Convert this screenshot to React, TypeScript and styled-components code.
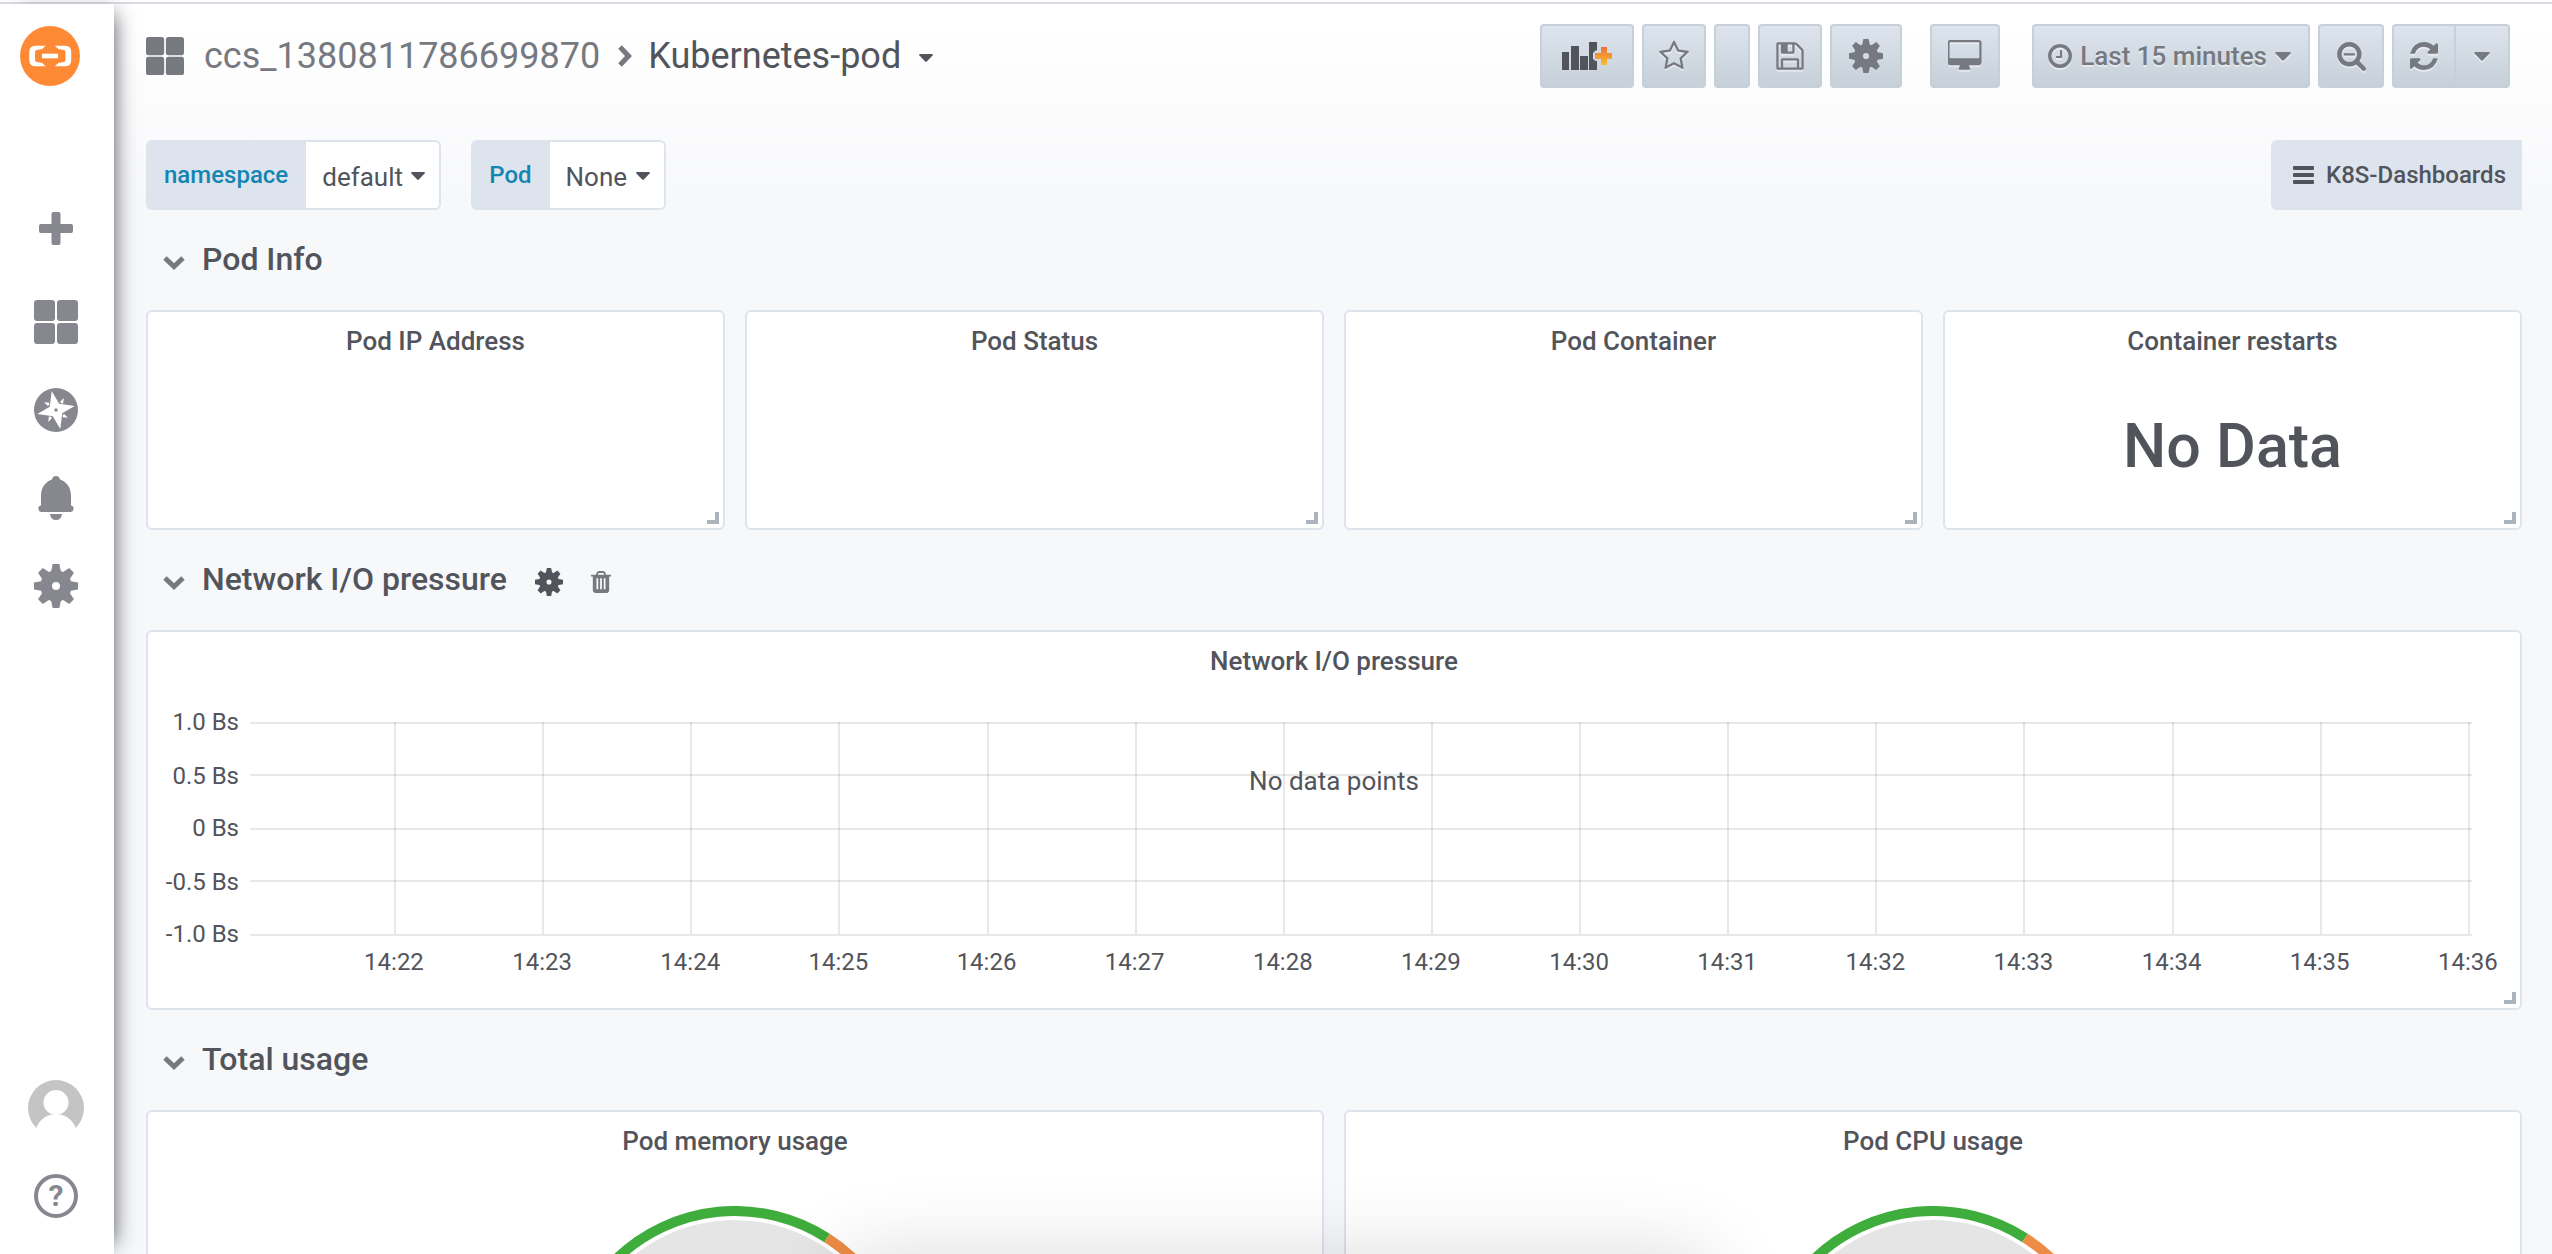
import React from "react";
import styled, { createGlobalStyle } from "styled-components";

const color = {
  text: "#52545c",
  weak: "#767980",
  icon: "#87888f",
  link: "#1385b3",
  panelBorder: "#dde4ed",
  buttonBorder: "#c7d0d9",
  page: "#f7f8fa",
};

const GlobalStyle = createGlobalStyle`
  * { box-sizing: border-box; }
  body {
    margin: 0;
    background: #fff;
    color: ${color.text};
    font-family: Roboto, "Liberation Sans", sans-serif;
    font-size: 26px;
  }
  button, select { font: inherit; color: inherit; }
  h1, h2, h3, p { margin: 0; font-weight: 500; }
  svg { display: block; flex: none; }
`;

/* ---------- layout ---------- */

const Shell = styled.div`
  height: 100vh;
  padding-top: 2px;
  overflow: hidden;
  display: flex;
  flex-direction: column;
`;

const Frame = styled.div`
  flex: 1;
  min-height: 0;
  border-top: 2px solid #dcdce4;
  display: flex;
`;

const Sidebar = styled.nav`
  position: relative;
  z-index: 1;
  flex: none;
  width: 114px;
  padding: 22px 2px 14px 0;
  background: #fff;
  box-shadow: 10px 0 20px -10px ${color.text};
  display: flex;
  flex-direction: column;
  align-items: center;
`;

const LogoLink = styled.a`
  margin: 0 12px 104px 0;
`;

const NavLink = styled.a`
  height: 88px;
  display: flex;
  align-items: center;
  justify-content: center;
  color: ${color.icon};
  text-decoration: none;
`;

const SidebarSpacer = styled.div`
  flex: 1;
`;

const HelpMark = styled.span`
  width: 44px;
  height: 44px;
  border: 4px solid ${color.icon};
  border-radius: 50%;
  font-size: 30px;
  font-weight: 700;
  line-height: 36px;
  text-align: center;
`;

const Main = styled.main`
  flex: 1;
  min-width: 0;
  overflow: hidden;
  padding: 0 30px 0 32px;
  background: linear-gradient(180deg, #fff 20px, ${color.page} 200px);
`;

const Navbar = styled.header`
  height: 136px;
  padding: 20px 12px 0 0;
  display: flex;
  justify-content: space-between;
  align-items: flex-start;
`;

const Breadcrumb = styled.div`
  height: 64px;
  display: flex;
  align-items: center;
  color: ${color.weak};
  font-size: 36px;
`;

const FolderLink = styled.a`
  margin: 0 18px 0 20px;
  color: inherit;
  text-decoration: none;
`;

const DashboardPicker = styled.button`
  margin-left: 16px;
  padding: 0;
  border: 0;
  background: none;
  color: ${color.text};
  display: flex;
  align-items: center;
  gap: 18px;

  svg {
    margin-top: 4px;
  }
`;

const Toolbar = styled.div`
  display: flex;
  gap: 32px;
`;

const ButtonGroup = styled.div<{ $joined?: boolean }>`
  display: flex;
  gap: ${(p) => (p.$joined ? 0 : 8)}px;

  ${(p) =>
    p.$joined &&
    `
    button + button { border-left: 0; border-radius: 0 4px 4px 0; }
    button:first-child { border-radius: 4px 0 0 4px; }
  `}
`;

const ViewGroup = styled.div`
  display: flex;
  gap: 28px;
`;

const ToolButton = styled.button<{ $width?: number }>`
  height: 64px;
  ${(p) => (p.$width ? `width: ${p.$width}px; padding: 0;` : "padding: 0 17px 0 14px;")}
  border: 2px solid ${color.buttonBorder};
  border-radius: 4px;
  background: linear-gradient(180deg, ${color.panelBorder}, ${color.buttonBorder});
  color: ${color.weak};
  font-weight: 500;
  text-shadow: 0 2px 0 rgba(255, 255, 255, 0.45);
  white-space: nowrap;
  display: flex;
  align-items: center;
  justify-content: center;
  gap: 8px;
`;

const Submenu = styled.div`
  display: flex;
  gap: 30px;
`;

const Variable = styled.div`
  height: 70px;
  display: flex;
`;

const VariableLabel = styled.label`
  padding: 0 18px;
  border-radius: 6px 0 0 6px;
  background: ${color.panelBorder};
  color: ${color.link};
  font-size: 24px;
  font-weight: 500;
  line-height: 70px;
`;

const SelectBox = styled.div`
  position: relative;
  border: 2px solid ${color.panelBorder};
  border-left: 0;
  border-radius: 0 6px 6px 0;
  background: #fff;
  display: flex;

  svg {
    position: absolute;
    right: 14px;
    top: 30px;
    pointer-events: none;
  }
`;

const Select = styled.select`
  appearance: none;
  padding: 4px 36px 0 16px;
  border: 0;
  border-radius: inherit;
  background: none;
`;

const DashboardsLink = styled.a`
  height: 70px;
  margin-left: auto;
  padding: 0 16px 0 22px;
  border-radius: 6px 0 0 6px;
  background: ${color.panelBorder};
  color: ${color.text};
  font-size: 24px;
  font-weight: 500;
  text-decoration: none;
  display: flex;
  align-items: center;
  gap: 12px;
`;

/* ---------- dashboard rows and panels ---------- */

const RowHeader = styled.div`
  height: 100px;
  padding: 0 0 2px 17px;
  display: flex;
  align-items: center;
`;

const RowToggle = styled.button`
  padding: 0;
  border: 0;
  background: none;
  font-size: 32px;
  display: flex;
  align-items: center;
  gap: 17px;

  svg {
    margin-top: 8px;
  }
`;

const RowAction = styled.button<{ $weak?: boolean }>`
  margin: 6px 0 0 28px;
  padding: 0;
  border: 0;
  background: none;
  color: ${(p) => (p.$weak ? color.weak : color.text)};
`;

const PanelGrid = styled.div<{ $columns: number }>`
  display: grid;
  grid-template-columns: repeat(${(p) => p.$columns}, 1fr);
  gap: 20px;
`;

const PanelBox = styled.section<{ $height: number }>`
  position: relative;
  height: ${(p) => p.$height}px;
  border: 2px solid ${color.panelBorder};
  border-radius: 6px;
  background: #fff;
`;

const PanelTitle = styled.h3`
  font-size: 26px;
  line-height: 58px;
  text-align: center;
`;

const ResizeHandle = styled.span`
  position: absolute;
  right: 4px;
  bottom: 4px;
  width: 12px;
  height: 12px;
  border: solid #acb4be;
  border-width: 0 4px 4px 0;
`;

const BigValue = styled.p`
  padding-top: 36px;
  font-size: 61px;
  line-height: 80px;
  text-align: center;
`;

const Chart = styled.div`
  position: relative;
  margin: 32px 48px 0 102px;

  svg {
    width: 100%;
    overflow: visible;
  }
`;

const EmptyNote = styled.p`
  position: absolute;
  inset: 43px 0 auto;
  margin-left: -54px;
  font-weight: 400;
  line-height: 32px;
  text-align: center;
`;

const GaugeBox = styled.div`
  padding-top: 36px;
  display: flex;
  justify-content: center;
`;

const BottomShade = styled.div`
  position: fixed;
  z-index: 2;
  left: 33%;
  right: 33%;
  bottom: -200px;
  height: 200px;
  box-shadow: 0 0 80px rgba(0, 0, 0, 0.14);
  pointer-events: none;
`;

/* ---------- icons ---------- */

type GlyphProps = { d: string; size: number; box?: string; width?: number; lit?: boolean };

const Lit = styled.svg<{ $lit?: boolean }>`
  ${(p) => p.$lit && "filter: drop-shadow(0 2px 0 rgba(255, 255, 255, 0.45));"}
`;

const Glyph = ({ d, size, width, box = "0 0 1792 1792", lit }: GlyphProps) => (
  <Lit $lit={lit} width={width ?? size} height={size} viewBox={box} fill="currentColor" aria-hidden>
    <path d={d} />
  </Lit>
);

const glyph = {
  star: "M1201 1004l306-297-422-62-189-382-189 382-422 62 306 297-73 421 378-199 377 199zm527-357q0 22-26 48l-363 354 86 500q1 7 1 20 0 50-41 50-19 0-40-12l-449-236-449 236q-22 12-40 12-21 0-31.5-14.5t-10.5-35.5q0-6 2-20l86-500-364-354q-25-27-25-48 0-37 56-46l502-73 225-455q19-41 49-41t49 41l225 455 502 73q56 9 56 46z",
  save: "M512 1536h768v-384h-768v384zm896 0h128v-896q0-14-10-38.5t-20-34.5l-281-281q-10-10-34-20t-39-10v416q0 40-28 68t-68 28h-576q-40 0-68-28t-28-68v-416h-128v1280h128v-416q0-40 28-68t68-28h832q40 0 68 28t28 68v416zm-384-928v-320q0-13-9.5-22.5t-22.5-9.5h-192q-13 0-22.5 9.5t-9.5 22.5v320q0 13 9.5 22.5t22.5 9.5h192q13 0 22.5-9.5t9.5-22.5zm640 32v928q0 40-28 68t-68 28h-1344q-40 0-68-28t-28-68v-1344q0-40 28-68t68-28h928q40 0 88 20t76 48l280 280q28 28 48 76t20 88z",
  desktop:
    "M1728 992v-832q0-13-9.5-22.5t-22.5-9.5h-1600q-13 0-22.5 9.5t-9.5 22.5v832q0 13 9.5 22.5t22.5 9.5h1600q13 0 22.5-9.5t9.5-22.5zm128-832v1088q0 66-47 113t-113 47h-544q0 37 16 77.5t32 71 16 43.5q0 26-19 45t-45 19h-512q-26 0-45-19t-19-45q0-14 16-44t32-70 16-78h-544q-66 0-113-47t-47-113v-1088q0-66 47-113t113-47h1600q66 0 113 47t47 113z",
  clock:
    "M1024 544v448q0 14-9 23t-23 9h-320q-14 0-23-9t-9-23v-64q0-14 9-23t23-9h224v-352q0-14 9-23t23-9h64q14 0 23 9t9 23zm416 352q0-148-73-273t-198-198-273-73-273 73-198 198-73 273 73 273 198 198 273 73 273-73 198-198 73-273zm224 0q0 209-103 385.5t-279.5 279.5-385.5 103-385.5-103-279.5-279.5-103-385.5 103-385.5 279.5-279.5 385.5-103 385.5 103 279.5 279.5 103 385.5z",
  zoomOut:
    "M1088 800v64q0 13-9.5 22.5t-22.5 9.5h-576q-13 0-22.5-9.5t-9.5-22.5v-64q0-13 9.5-22.5t22.5-9.5h576q13 0 22.5 9.5t9.5 22.5zm128 32q0-185-131.5-316.5t-316.5-131.5-316.5 131.5-131.5 316.5 131.5 316.5 316.5 131.5 316.5-131.5 131.5-316.5zm512 832q0 53-37.5 90.5t-90.5 37.5q-54 0-90-38l-343-342q-179 124-399 124-143 0-273.5-55.5t-225-150-150-225-55.5-273.5 55.5-273.5 150-225 225-150 273.5-55.5 273.5 55.5 225 150 150 225 55.5 273.5q0 220-124 399l343 343q37 37 37 90z",
  refresh:
    "M1639 1056q0 5-1 7-64 268-268 434.5t-478 166.5q-146 0-282.5-55t-243.5-157l-129 129q-19 19-45 19t-45-19-19-45v-448q0-26 19-45t45-19h448q26 0 45 19t19 45-19 45l-137 137q71 66 161 102t187 36q134 0 250-65t186-179q11-17 53-117 8-23 30-23h192q13 0 22.5 9.5t9.5 22.5zm25-800v448q0 26-19 45t-45 19h-448q-26 0-45-19t-19-45 19-45l138-138q-148-137-349-137-134 0-250 65t-186 179q-11 17-53 117-8 23-30 23h-199q-13 0-22.5-9.5t-9.5-22.5v-7q65-268 270-434.5t480-166.5q146 0 284 55.5t245 156.5l130-129q19-19 45-19t45 19 19 45z",
  trash:
    "M704 1376v-704q0-14-9-23t-23-9h-64q-14 0-23 9t-9 23v704q0 14 9 23t23 9h64q14 0 23-9t9-23zm256 0v-704q0-14-9-23t-23-9h-64q-14 0-23 9t-9 23v704q0 14 9 23t23 9h64q14 0 23-9t9-23zm256 0v-704q0-14-9-23t-23-9h-64q-14 0-23 9t-9 23v704q0 14 9 23t23 9h64q14 0 23-9t9-23zm-544-992h448l-48-117q-7-9-17-11h-317q-10 2-17 11zm928 32v64q0 14-9 23t-23 9h-96v948q0 83-47 143.5t-113 60.5h-832q-66 0-113-58.5t-47-141.5v-952h-96q-14 0-23-9t-9-23v-64q0-14 9-23t23-9h309l70-167q15-37 54-63t79-26h320q40 0 79 26t54 63l70 167h309q14 0 23 9t9 23z",
};

const Caret = ({ width = 14, lit }: { width?: number; lit?: boolean }) => (
  <Lit $lit={lit} width={width} height={width / 2 + 1} viewBox="0 0 14 8" fill="currentColor" aria-hidden>
    <path d="M1 0h12q1.4.2.6 1.4l-5.800 6q-.8.8-1.600 0l-5.800-6Q-.4.2 1 0z" />
  </Lit>
);

const ChevronDown = () => (
  <svg width="22" height="14" viewBox="0 0 22 14" fill="none" stroke={color.weak} strokeWidth="5" aria-hidden>
    <path d="M2 2l9 8.500L20 2" />
  </svg>
);

const ChevronRight = () => (
  <svg width="14" height="22" viewBox="0 0 14 22" fill="none" stroke="currentColor" strokeWidth="5" aria-hidden>
    <path d="M2 2l8.500 9L2 20" />
  </svg>
);

const Tiles = ({ size }: { size: number }) => (
  <svg width={size} height={size} viewBox="0 0 44 44" fill="currentColor" aria-hidden>
    {[0, 23].map((x) => [0, 23].map((y) => <rect key={`${x}-${y}`} x={x} y={y} width="21" height="21" rx="3" />))}
  </svg>
);

const gearPath = (() => {
  const at = (x: number, y: number, turn: number) => {
    const a = (turn * Math.PI) / 4;
    return `${(x * Math.cos(a) - y * Math.sin(a)).toFixed(2)} ${(x * Math.sin(a) + y * Math.cos(a)).toFixed(2)}`;
  };
  const teeth = [0, 1, 2, 3, 4, 5, 6, 7].map(
    (k) => `${k ? "L" : "M"}${at(-4.8, -15, k)}L${at(-3.4, -22, k)}L${at(3.4, -22, k)}L${at(4.8, -15, k)}`
  );
  return `${teeth.join("")}ZM4 0A4 4 0 1 0 -4 0A4 4 0 1 0 4 0Z`;
})();

const Gear = ({ size }: { size: number }) => (
  <svg width={size} height={size} viewBox="-22 -22 44 44" fill="currentColor" fillRule="evenodd" aria-hidden>
    <path d={gearPath} />
  </svg>
);

const Logo = () => (
  <svg width="60" height="60" viewBox="0 0 60 60" aria-hidden>
    <circle cx="30" cy="30" r="30" fill="#ff8a36" />
    <g fill="#fff">
      <path id="bracket" d="M25.700 19.700H15.500Q9.300 19.700 9.300 26v8q0 6.300 6.200 6.300h10.200l-3.500-3.200-5.700-1.200q-1.500-.4-1.500-2v-7.800q0-1.600 1.500-2l5.700-1.200z" />
      <use href="#bracket" transform="translate(60.500 0) scale(-1 1)" />
      <path d="M22 27.700h16v4.600H22z" />
    </g>
  </svg>
);

const Plus = () => (
  <svg width="44" height="44" viewBox="0 0 44 44" fill="currentColor" aria-hidden>
    <rect x="5" y="12" width="34" height="9" rx="2" />
    <rect x="17.500" y="0" width="9" height="33" rx="2" />
  </svg>
);

const Compass = () => (
  <svg width="44" height="44" viewBox="-22 -22 44 44" aria-hidden>
    <circle r="22" fill="currentColor" />
    <g fill="#fff">
      <path d="M-4.300-19L3.200-6.200 18.700-4 6.200 3.200 4.300 19-3.200 6.200-18.700 4-6.200-3.200z" />
      {[0, 90, 180, 270].map((a) => (
        <path key={a} transform={`rotate(${a})`} d="M7.700-12L7.200-6.800Q5.500-6 4-8z" />
      ))}
    </g>
    <circle r="1.700" fill="currentColor" />
  </svg>
);

const Bell = () => (
  <svg width="44" height="44" viewBox="0 0 44 44" fill="currentColor" aria-hidden>
    <path d="M22 0q3.500 0 4 3.600C33 6 37 12 37 20v9.500q2.700.6 2.700 3T37 36H7q-2.700-.8-2.700-3.500t2.700-3V20C7 12 11 6 18 3.600Q18.500 0 22 0zM16 38h12q-.8 6-6 6t-6-6z" />
  </svg>
);

const Avatar = () => (
  <svg width="56" height="56" viewBox="0 0 56 56" aria-hidden>
    <clipPath id="avatar">
      <circle cx="28" cy="28" r="28" />
    </clipPath>
    <g clipPath="url(#avatar)">
      <rect width="56" height="48" fill="#c4c4c4" />
      <circle cx="28" cy="22.500" r="12.500" fill="#fff" />
      <circle cx="28" cy="55" r="21" fill="#fff" />
    </g>
  </svg>
);

const AddPanel = () => (
  <svg width="50" height="28" viewBox="0 0 50 28" aria-hidden>
    <defs>
      <linearGradient id="add" x1="0" y1="0" x2="0" y2="1">
        <stop offset="0" stopColor="#ee6f3f" />
        <stop offset="1" stopColor="#fabf2a" />
      </linearGradient>
    </defs>
    <path fill={color.text} d="M0 10h7v18H0zM9 4h8v24H9zM18 14h8v14h-8zM27 0h8v8.500h-1.500L31 11v6l2.500 2H35v9h-8z" />
    <path fill="url(#add)" d="M39 5h6v6h5v6h-5v6h-6v-6h-6v-6h6z" />
  </svg>
);

const Bars = () => (
  <svg width="21" height="18" viewBox="0 0 21 18" fill="currentColor" aria-hidden>
    {[0, 7, 14].map((y) => (
      <rect key={y} y={y} width="21" height="4" rx="1" />
    ))}
  </svg>
);

/* ---------- charts ---------- */

const valueTicks = [
  { label: "1.0 Bs", y: 0, textY: 8 },
  { label: "0.5 Bs", y: 52, textY: 62 },
  { label: "0 Bs", y: 106, textY: 114 },
  { label: "-0.5 Bs", y: 158, textY: 168 },
  { label: "-1.0 Bs", y: 212, textY: 220 },
];
const minutes = Array.from({ length: 15 }, (_, i) => 22 + i);
const tickX = (i: number) => `${((i + 0.972) / 15) * 100}%`;

const AxisText = styled.text`
  fill: ${color.text};
  font-size: 24px;
`;

const NetworkChart = () => (
  <Chart>
    <svg height="256" aria-label="Network I/O pressure">
      {valueTicks.map((t) => (
        <React.Fragment key={t.label}>
          <AxisText x="-11" y={t.textY} textAnchor="end">
            {t.label}
          </AxisText>
          <rect x="0" y={t.y} width="100%" height="2" fill="rgba(0,0,0,.09)" shapeRendering="crispEdges" />
        </React.Fragment>
      ))}
      {minutes.map((m, i) => (
        <React.Fragment key={m}>
          <rect x={tickX(i)} y="0" width="2" height="212" fill="rgba(0,0,0,.09)" shapeRendering="crispEdges" />
          <AxisText x={tickX(i)} y="248" textAnchor="middle">
            {`14:${m}`}
          </AxisText>
        </React.Fragment>
      ))}
    </svg>
    <EmptyNote>No data points</EmptyNote>
  </Chart>
);

const polar = (r: number, deg: number) => {
  const a = (deg * Math.PI) / 180;
  return `${(176 + r * Math.sin(a)).toFixed(2)} ${(176 - r * Math.cos(a)).toFixed(2)}`;
};
const arc = (r: number, from: number, to: number) =>
  `M${polar(r, from)}A${r} ${r} 0 ${to - from > 180 ? 1 : 0} 1 ${polar(r, to)}`;

const Gauge = () => (
  <GaugeBox>
    <svg width="352" height="352" viewBox="0 0 352 352" fill="none" aria-hidden>
      <path d={arc(132, -120, 120)} stroke="#e5e5e5" strokeWidth="60" />
      <path d={arc(171, -120, 32.6)} stroke="#3fad3c" strokeWidth="10" />
      <path d={arc(171, 32.6, 75)} stroke="#ec8c46" strokeWidth="10" />
      <path d={arc(171, 75, 120)} stroke="#f5494b" strokeWidth="10" />
    </svg>
  </GaugeBox>
);

/* ---------- composed parts ---------- */

type PanelProps = { title: string; height: number; children?: React.ReactNode };

const Panel = ({ title, height, children }: PanelProps) => (
  <PanelBox $height={height}>
    <PanelTitle>{title}</PanelTitle>
    {children}
    <ResizeHandle />
  </PanelBox>
);

const Row = ({ title, children }: { title: string; children?: React.ReactNode }) => (
  <RowHeader>
    <h2>
      <RowToggle>
        <ChevronDown />
        {title}
      </RowToggle>
    </h2>
    {children}
  </RowHeader>
);

const VariableSelect = ({ name, value }: { name: string; value: string }) => (
  <Variable>
    <VariableLabel htmlFor={name}>{name}</VariableLabel>
    <SelectBox>
      <Select id={name} defaultValue={value}>
        <option>{value}</option>
      </Select>
      <Caret />
    </SelectBox>
  </Variable>
);

export default function App() {
  return (
    <Shell>
      <GlobalStyle />
      <Frame>
        <Sidebar>
          <LogoLink href="#home" aria-label="Home">
            <Logo />
          </LogoLink>
          <NavLink href="#create" aria-label="Create">
            <Plus />
          </NavLink>
          <NavLink href="#dashboards" aria-label="Dashboards">
            <Tiles size={44} />
          </NavLink>
          <NavLink href="#explore" aria-label="Explore">
            <Compass />
          </NavLink>
          <NavLink href="#alerting" aria-label="Alerting">
            <Bell />
          </NavLink>
          <NavLink href="#configuration" aria-label="Configuration">
            <Gear size={44} />
          </NavLink>
          <SidebarSpacer />
          <NavLink href="#profile" aria-label="Profile">
            <Avatar />
          </NavLink>
          <NavLink href="#help" aria-label="Help">
            <HelpMark>?</HelpMark>
          </NavLink>
        </Sidebar>
        <Main>
          <Navbar>
            <Breadcrumb>
              <Tiles size={38} />
              <FolderLink href="#folder">ccs_1380811786699870</FolderLink>
              <ChevronRight />
              <DashboardPicker>
                Kubernetes-pod
                <Caret />
              </DashboardPicker>
            </Breadcrumb>
            <Toolbar>
              <ViewGroup>
                <ButtonGroup>
                  <ToolButton $width={94} aria-label="Add panel">
                    <AddPanel />
                  </ToolButton>
                  <ToolButton $width={64} aria-label="Mark as favorite">
                    <Glyph d={glyph.star} size={32} lit />
                  </ToolButton>
                  <ToolButton $width={36} aria-label="Share dashboard" />
                  <ToolButton $width={64} aria-label="Save dashboard">
                    <Glyph d={glyph.save} size={32} lit />
                  </ToolButton>
                  <ToolButton $width={72} aria-label="Dashboard settings">
                    <Gear size={34} />
                  </ToolButton>
                </ButtonGroup>
                <ToolButton $width={70} aria-label="Cycle view mode">
                  <Glyph d={glyph.desktop} size={32} width={34} box="0 0 1856 1792" lit />
                </ToolButton>
              </ViewGroup>
              <ButtonGroup>
                <ToolButton>
                  <Glyph d={glyph.clock} size={24} box="128 128 1536 1536" lit />
                  Last 15 minutes
                  <Caret width={16} lit />
                </ToolButton>
                <ToolButton $width={66} aria-label="Zoom out">
                  <Glyph d={glyph.zoomOut} size={30} box="0 64 1728 1728" lit />
                </ToolButton>
                <ButtonGroup $joined>
                  <ToolButton $width={64} aria-label="Refresh">
                    <Glyph d={glyph.refresh} size={28} box="128 128 1536 1536" lit />
                  </ToolButton>
                  <ToolButton $width={54} aria-label="Refresh interval">
                    <Caret width={16} lit />
                  </ToolButton>
                </ButtonGroup>
              </ButtonGroup>
            </Toolbar>
          </Navbar>

          <Submenu>
            <VariableSelect name="namespace" value="default" />
            <VariableSelect name="Pod" value="None" />
            <DashboardsLink href="#k8s">
              <Bars />
              K8S-Dashboards
            </DashboardsLink>
          </Submenu>

          <Row title="Pod Info" />
          <PanelGrid $columns={4}>
            <Panel title="Pod IP Address" height={220} />
            <Panel title="Pod Status" height={220} />
            <Panel title="Pod Container" height={220} />
            <Panel title="Container restarts" height={220}>
              <BigValue>No Data</BigValue>
            </Panel>
          </PanelGrid>

          <Row title="Network I/O pressure">
            <RowAction aria-label="Row settings">
              <Gear size={28} />
            </RowAction>
            <RowAction $weak aria-label="Delete row">
              <Glyph d={glyph.trash} size={24} width={20} box="192 64 1408 1664" />
            </RowAction>
          </Row>
          <PanelGrid $columns={1}>
            <Panel title="Network I/O pressure" height={380}>
              <NetworkChart />
            </Panel>
          </PanelGrid>

          <Row title="Total usage" />
          <PanelGrid $columns={2}>
            <Panel title="Pod memory usage" height={460}>
              <Gauge />
            </Panel>
            <Panel title="Pod CPU usage" height={460}>
              <Gauge />
            </Panel>
          </PanelGrid>
        </Main>
      </Frame>
      <BottomShade />
    </Shell>
  );
}
